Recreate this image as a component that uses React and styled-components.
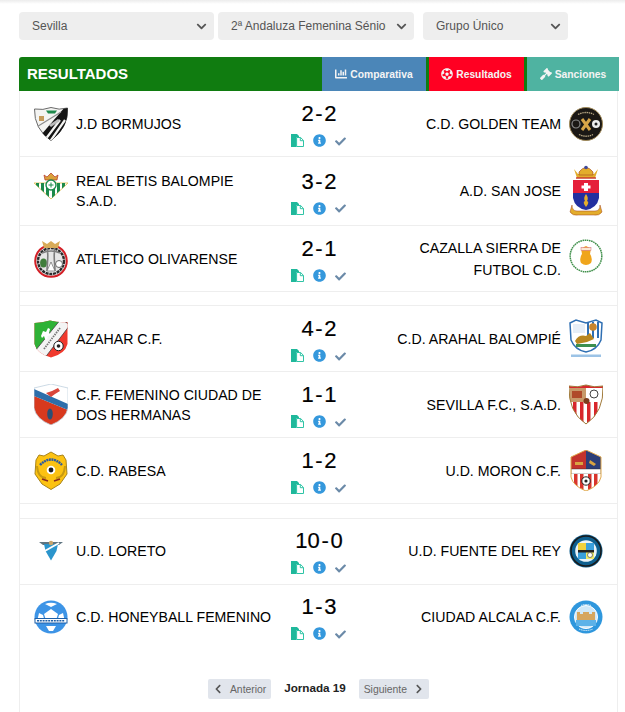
import React from "react";
import styled, { createGlobalStyle } from "styled-components";
import { FaChartBar, FaFutbol, FaGavel, FaInfoCircle, FaCheck, FaChevronLeft, FaChevronRight, FaChevronDown } from "react-icons/fa";

const Global = createGlobalStyle`
  html, body { margin: 0; padding: 0; background: #fff; }
  body { font-family: "Liberation Sans", Arial, sans-serif; color: #000; }
`;

const Page = styled.div`
  width: 625px; height: 712px; overflow: hidden; display: flex; flex-direction: column;
`;
const TopShade = styled.div`
  height: 4px; flex: none; background: linear-gradient(#ececec, #fff);
`;
const Filters = styled.div`
  display: flex; margin: 8px 0 17px 19px; height: 28px;
`;
const SelectWrap = styled.div`
  position: relative; width: ${p => p.$w}px; margin-right: ${p => p.$mr}px; flex: none;
`;
const Select = styled.select`
  appearance: none; border: 0; outline: 0; width: 100%; height: 28px; border-radius: 4px;
  background: #eeeeee; color: #555; font: 12px "Liberation Sans", Arial, sans-serif;
  padding: 0 28px 0 13px;
`;
const Arrow = styled.span`
  position: absolute; right: 7px; top: 9px; color: #555; font-size: 11px; line-height: 0; pointer-events: none;
`;
const Panel = styled.div`
  margin: 0 6px 0 19px; flex: 1; display: flex; flex-direction: column;
`;
const Head = styled.div`
  height: 34px; background: #107c10; display: flex; align-items: stretch; border-radius: 3px 3px 0 0; flex: none;
`;
const Title = styled.div`
  flex: 1; color: #fff; font-weight: bold; font-size: 15px; line-height: 34px; padding-left: 8px;
`;
const Tab = styled.div`
  background: ${p => p.$bg}; width: ${p => p.$w}px; margin-left: ${p => p.$ml || 0}px; color: #f4f4f4;
  font-weight: bold; font-size: 10.3px; display: flex; align-items: center; justify-content: center; gap: 3px;
  svg { font-size: 12px; }
`;
const Body = styled.div`
  flex: 1; border-left: 1px solid #eee; border-right: 1px solid #eee; margin-right: 1px; display: flex; flex-direction: column;
`;
const Row = styled.div`
  display: grid; grid-template-columns: 255px 88px 255px; align-items: center;
  border-bottom: ${p => (p.$last ? "1px solid transparent" : "1px solid #eee")};
  padding: ${p => (p.$tight ? "7px 0 9px" : "8px 0")}; box-sizing: border-box;
  min-height: 66px; flex: none;
`;
const Spacer = styled.div`
  height: ${p => p.$h}px; border-bottom: 1px solid #eee; box-sizing: border-box; flex: none;
`;
const Team = styled.div`
  display: flex; align-items: center; gap: 8px; font-size: 14.15px; line-height: ${p => (p.$away ? 22 : 20)}px;
  padding: ${p => (p.$away ? "0 15px 0 0" : "0 0 0 14px")};
  justify-content: ${p => (p.$away ? "flex-end" : "flex-start")};
  text-align: ${p => (p.$away ? "right" : "left")};
`;
const TeamName = styled.span`
  flex: ${p => (p.$away ? "0 1 auto" : "1")}; min-width: 0;
`;
const Crest = styled.svg`
  width: 34px; height: ${p => p.$h}px; flex: none; display: block;
`;
const Middle = styled.div`
  display: flex; flex-direction: column; align-items: center;
`;
const Score = styled.div`
  font-size: 22px; line-height: 27px; height: 27px; word-spacing: -4.5px; -webkit-text-stroke: 0.2px #000; white-space: nowrap;
`;
const Actions = styled.div`
  display: flex; align-items: center; gap: 9px; height: 13px; margin: 7px 2px 0 0;
`;
const Info = styled(FaInfoCircle)`
  color: #3598dc; font-size: 13px; display: block;
`;
const Check = styled(FaCheck)`
  color: #6b8aa8; font-size: 11px; display: block; margin-top: 1px;
`;
const Pager = styled.div`
  display: flex; align-items: center; justify-content: center; margin-top: 28px; gap: 13px;
`;
const PageBtn = styled.div`
  height: 20px; background: #e1e5ec; border-radius: 2px; color: #666; font-size: 10.4px; display: flex;
  align-items: center; gap: 7px; box-sizing: border-box; width: ${p => p.$w}px; justify-content: center;
  svg { font-size: 10px; color: #555; }
`;
const PageLabel = styled.div`
  font-weight: bold; font-size: 11.7px; color: #222; margin-top: -3px;
`;

const CopyIcon = () => (
  <svg width="13" height="13" viewBox="0 0 13 13">
    <path d="M0 0h6l2 2v1H5.500v10H0z" fill="#1fb89b" />
    <path d="M5.600 3.500h4l2.900 2.900v6.100H5.600z" fill="#fff" stroke="#2fc4a6" />
    <path d="M9.300 3.500v3.200h3" fill="none" stroke="#2fc4a6" />
  </svg>
);

const shield1 = "M0.5 2 Q9 3.5 17 0.5 Q25 3.5 33.5 1 Q35 20 17 33.5 Q0 22 0.5 2Z";

const Bormujos = () => (
  <Crest $h={34} viewBox="0 0 34 34">
    <defs><clipPath id="b1"><path d={shield1} /></clipPath></defs>
    <path d={shield1} fill="#f4f4f2" stroke="#6a6a6a" />
    <g clipPath="url(#b1)">
      <path d="M7 28 L31 0 H36 V36 H12Z" fill="#141414" />
      <path d="M11 33L26 13M16.500 34L31 13M22.500 34L34 17" stroke="#f4f4f2" strokeWidth="2.200" />
      <path d="M1 21L27 5" stroke="#8c8c8c" strokeWidth="1.200" />
      <path d="M15 18L24 12L26 14L17 20Z" fill="#bbb" />
      <rect x="5" y="9" width="5" height="5" fill="#c59a5a" />
      <path d="M12 3.500h11l-2 3h-7z" fill="#1f8a4c" />
    </g>
  </Crest>
);
const Betis = () => (
  <Crest $h={38} viewBox="0 0 34 38">
    <defs><clipPath id="b2"><path d="M0 11H34L17 27Z" /></clipPath></defs>
    <path d="M11 8 L10 3 L13 5 L17 1 L21 5 L24 3 L23 8Z" fill="#d9a13a" stroke="#b5322a" strokeWidth=".7" />
    <path d="M0 11H34L17 27Z" fill="#fff" stroke="#e3c76c" />
    <g clipPath="url(#b2)">
      {[2, 7, 12, 18, 23, 28].map(x => <rect key={x} x={x} y="10" width="3" height="18" fill="#1c8a4a" />)}
    </g>
    <circle cx="17" cy="13" r="5" fill="#fff" stroke="#1c8a4a" strokeWidth="1.400" />
    <path d="M14.500 13h5M17 10.500v5" stroke="#1c8a4a" />
  </Crest>
);
const Olivarense = () => (
  <Crest $h={38} viewBox="0 0 34 38">
    <circle cx="17" cy="21" r="15.800" fill="#e6e6e6" stroke="#d31f26" strokeWidth="2" />
    <circle cx="17" cy="21" r="13" fill="none" stroke="#2a2a2a" strokeWidth="2.400" strokeDasharray="3 .8" />
    <path d="M10 8L8 1L13 4L17 1L21 4L26 1L24 8Z" fill="#d8ab58" />
    <ellipse cx="9.500" cy="23" rx="3.400" ry="4.500" fill="#3f7d3a" />
    <path d="M13 8C15 14 13 24 13 31M21 8C19 14 21 24 21 31M8 13Q17 9 26 13" stroke="#7d7d7d" strokeWidth="1.600" fill="none" />
    <path d="M17 22L21 31H13Z" fill="#fff" stroke="#555" strokeWidth=".6" />
    <circle cx="25" cy="24" r="3.500" fill="#fff" stroke="#666" />
  </Crest>
);
const Azahar = () => (
  <Crest $h={38} viewBox="0 0 34 38">
    <defs><clipPath id="b4"><path d="M0.500 3Q8 2.500 16 0.500Q25 3 33.500 2V24Q31 34 17 37.500Q3 34 0.500 24Z" /></clipPath></defs>
    <g clipPath="url(#b4)">
      <rect width="34" height="38" fill="#f0392d" />
      <path d="M0 0H27L1 32H0Z" fill="#2fb236" />
      <path d="M27 -1L36 5L10 39L1 31Z" fill="#f4f4f4" stroke="#444" strokeWidth=".8" />
      <path d="M7 16l2-5 3 1 2-4 2 1-1 4 2 2-3 1-1 4-2-1-1-3-2 2z" fill="#fff" />
      <circle cx="24.500" cy="26" r="4.700" fill="#fff" stroke="#222" />
      <circle cx="24.500" cy="26" r="1.800" fill="#222" />
      <path d="M10 29L26 8" stroke="#777" strokeWidth="1.800" strokeDasharray="1.500 1" />
    </g>
  </Crest>
);
const Hermanas = () => (
  <Crest $h={41} viewBox="0 0 34 41">
    <defs><clipPath id="b5"><path d="M0 4L17 0L34 4V24Q32 35 17 41Q2 35 0 24Z" /></clipPath></defs>
    <path d="M0 4L17 0L34 4V24Q32 35 17 41Q2 35 0 24Z" fill="#fff" />
    <g clipPath="url(#b5)">
      <path d="M0 12L34 26V41H0Z" fill="#d8391e" />
      <path d="M0 5L34 20V26L0 12Z" fill="#2d6eaa" />
      <path d="M12 9l6-2 6-3 2 3-5 3-4 3z" fill="#d9453a" />
      <ellipse cx="16" cy="30" rx="2.800" ry="5.500" fill="#2c4f74" />
    </g>
    <path d="M0 4L17 0L34 4V24Q32 35 17 41Q2 35 0 24Z" fill="none" stroke="#bfd0de" strokeWidth=".8" />
  </Crest>
);
const Rabesa = () => (
  <Crest $h={39} viewBox="0 0 34 39">
    <path d="M5 4L10 5L17 1L24 5L29 4L32 9L33 23L26 33L17 38.500L8 33L1 23L2 9Z" fill="#fcc212" stroke="#a8841c" />
    <path d="M6 14Q17 3 28 14" fill="none" stroke="#2c5aa0" strokeWidth="2.400" strokeDasharray="2 .6" />
    <path d="M3 15Q4 27 12 27M31 15Q30 27 22 27" fill="none" stroke="#c79a12" strokeWidth="2" />
    <circle cx="17" cy="19" r="4.300" fill="#fff" />
    <circle cx="17" cy="19" r="2.400" fill="#1c1c1c" />
    <path d="M8 28L14 30M20 30L26 28" stroke="#8a2a1e" strokeWidth="1.800" />
  </Crest>
);
const Loreto = () => (
  <Crest $h={34} viewBox="0 0 34 34">
    <path d="M5 8H29L25 11H9Z" fill="#5e7480" />
    <path d="M10 10H24L22.500 17L17 26.500L11.500 17Z" fill="#2b95cc" />
    <path d="M9 18L25 9" stroke="#fff" strokeWidth="2" />
    <circle cx="17" cy="9" r="2.200" fill="#c9a46c" />
  </Crest>
);
const Honeyball = () => (
  <Crest $h={34} viewBox="0 0 34 34">
    <circle cx="17" cy="17" r="16.500" fill="#3d94e6" />
    <path d="M17 9L24 14L21.500 22H12.500L10 14Z" fill="#fff" />
    <path d="M5 13L9 15L11 22H3ZM29 13L25 15L23 22H31Z" fill="#fff" />
    <path d="M11 4Q17 1.500 23 4L17 7Z" fill="#fff" />
    <path d="M12 26H22L19 31H15Z" fill="#fff" />
    <rect x="0.500" y="18" width="33" height="5.500" fill="#1c5fa8" />
    <rect x="1.500" y="19" width="31" height="3.500" fill="#fff" />
    <path d="M3 20.700H31" stroke="#1c5fa8" strokeWidth="1.600" strokeDasharray="2 .8" />
  </Crest>
);
const Golden = () => (
  <Crest $h={34} viewBox="0 0 34 34">
    <circle cx="17" cy="17" r="16.500" fill="#1b1815" stroke="#a08a5b" />
    <path d="M13 12L21 23M21 12L13 23" stroke="#d7a548" strokeWidth="3" />
    <circle cx="7" cy="17" r="4" fill="none" stroke="#888" strokeWidth="1.200" />
    <circle cx="27" cy="17" r="4" fill="#eee" />
    <circle cx="27" cy="17" r="1.500" fill="#222" />
    <path d="M9 7.500Q17 3.500 25 7.500M10 27.500Q17 31 24 27.500" fill="none" stroke="#b9a884" strokeWidth="1.300" strokeDasharray="1.500 .7" />
  </Crest>
);
const SanJose = () => (
  <Crest $h={52} viewBox="0 0 34 52">
    <path d="M5 4L9 9H25L29 4L26 13H8Z" fill="#e3ad2c" />
    <path d="M10 7Q17 -2 24 7V10H10Z" fill="#e3ad2c" stroke="#a1431e" strokeWidth=".6" />
    <circle cx="17" cy="2.500" r="1.800" fill="#3f4a9c" />
    <path d="M7 13H27" stroke="#c8362a" strokeWidth="1.400" />
    <path d="M4 15H30V28H4Z" fill="#e51f3a" />
    <path d="M4 28H30V33Q28 43 17 45Q6 43 4 33Z" fill="#2330a0" />
    <path d="M15 18h4v2.500h2.500v3H19v2.500h-4v-2.500h-2.500v-3H15z" fill="#fff" />
    <path d="M17 29Q20 33 18 36Q21 37 17 42Q13 37 16 36Q14 33 17 29Z" fill="#e3ad2c" />
    <path d="M3 40Q3 46 8 46H26Q31 46 31 40L33 47Q30 51 25 50H9Q4 51 1 47Z" fill="#e3ad2c" stroke="#a1431e" strokeWidth=".5" />
  </Crest>
);
const Cazalla = () => (
  <Crest $h={40} viewBox="0 0 34 40">
    <circle cx="17" cy="17" r="15.800" fill="#fff" stroke="#3f8f4a" strokeWidth="1.500" strokeDasharray="1.600 .6" />
    <path d="M17 7L22 9.500L21 15Q24 19 22 24Q17 28 12 24Q10 19 13 15L12 9.500Z" fill="#f0a51c" />
    <rect x="12" y="8.500" width="10" height="3" fill="#fbe6cf" stroke="#c9455a" strokeWidth=".4" />
  </Crest>
);
const Arahal = () => (
  <Crest $h={41} viewBox="0 0 34 41">
    <path d="M1 5L7 2L17 5L27 2L33 5L32 22Q28 32 17 34Q6 32 2 22Z" fill="#fff" stroke="#2f6fb3" strokeWidth="1.500" />
    <path d="M4 6H16V15H4Z" fill="#e6eef7" />
    <path d="M19 5V20M24 4V20M29 4V20" stroke="#2f6fb3" strokeWidth="2" />
    <circle cx="24" cy="9" r="3.800" fill="#c9852c" />
    <path d="M6 23Q10 16 17 18L21 15L25 21L18 24L8 26Z" fill="#b8861f" />
    <rect x="7" y="26" width="20" height="3" fill="#3d8f4f" />
    <rect x="2" y="36.500" width="30" height="2.500" fill="#9cc3e6" />
  </Crest>
);
const Sevilla = () => (
  <Crest $h={41} viewBox="0 0 34 41">
    <defs><clipPath id="b6"><path d="M0 2Q9 4 17 1Q25 4 34 2Q35 28 17 40Q-1 28 0 2Z" /></clipPath></defs>
    <g clipPath="url(#b6)">
      <rect width="34" height="41" fill="#fff" />
      {[4, 11, 18, 25].map(x => <rect key={x} x={x} y="18" width="3.500" height="24" fill="#d8262c" />)}
      <rect width="34" height="4" fill="#d8262c" />
      <rect x="1" y="4" width="16" height="14" fill="#c89a6a" />
      <rect x="3" y="7" width="10" height="7" fill="#b04a2a" />
      <circle cx="17.500" cy="17" r="3" fill="#7c3d1e" />
      <circle cx="25" cy="10" r="4" fill="#fff" stroke="#444" />
    </g>
    <path d="M0 2Q9 4 17 1Q25 4 34 2Q35 28 17 40Q-1 28 0 2Z" fill="none" stroke="#a07a3a" strokeWidth="1" />
  </Crest>
);
const Moron = () => (
  <Crest $h={41} viewBox="0 0 34 41">
    <defs><clipPath id="b7"><path d="M2 7L17 0L32 7V27Q30 36 17 41Q4 36 2 27Z" /></clipPath></defs>
    <g clipPath="url(#b7)">
      <rect x="2" width="15" height="20" fill="#c3332c" />
      <rect x="17" width="15" height="20" fill="#2c3e78" />
      <path d="M6 15h8v-3h-8z" fill="#d9a441" />
      <path d="M21 10l6 4-2 2-5-3z" fill="#d9a441" />
      <rect x="2" y="19" width="30" height="5" fill="#fff" stroke="#222" strokeWidth=".4" />
      <rect x="2" y="24" width="30" height="17" fill="#fff" />
      {[5, 11, 19, 25].map(x => <rect key={x} x={x} y="24" width="3.500" height="17" fill="#d8342c" />)}
      <circle cx="17" cy="31" r="4.200" fill="#fff" stroke="#222" />
      <circle cx="17" cy="31" r="1.600" fill="#222" />
    </g>
    <path d="M2 7L17 0L32 7V27Q30 36 17 41Q4 36 2 27Z" fill="none" stroke="#e0a84c" />
  </Crest>
);
const Fuente = () => (
  <Crest $h={34} viewBox="0 0 34 34">
    <circle cx="17" cy="17" r="16.500" fill="#0e5f8e" />
    <circle cx="17" cy="17" r="15" fill="none" stroke="#1a1a1a" strokeWidth="1.500" />
    <circle cx="17" cy="17" r="10.800" fill="#e9f3f9" />
    <rect x="9" y="9" width="8" height="8" fill="#f1d23d" />
    <rect x="17" y="9" width="8" height="8" fill="#3aa0dc" />
    <rect x="9" y="17" width="8" height="8" fill="#3aa0dc" />
    <rect x="17" y="17" width="8" height="8" fill="#f1ea6a" />
    <rect x="9" y="16" width="16" height="2.500" fill="#222" />
    <circle cx="21" cy="21" r="2.500" fill="#fff" stroke="#333" strokeWidth=".6" />
  </Crest>
);
const Alcala = () => (
  <Crest $h={34} viewBox="0 0 34 34">
    <circle cx="17" cy="17" r="16.500" fill="#2f97dd" />
    <circle cx="17" cy="17" r="11.500" fill="#cfe8f8" stroke="#fff" />
    <path d="M8 12h3v2h3v-2h6v2h3v-2h3v8H8z" fill="#d6a65e" />
    <rect x="7" y="20" width="20" height="6" fill="#5db2e8" />
    <path d="M12 5.500Q17 3.500 22 5.500M10 29Q17 32 24 29" fill="none" stroke="#e3f1fb" strokeWidth="1" strokeDasharray="1.200 .6" />
  </Crest>
);

const days = [
  { gap: 0, matches: [
    ["J.D BORMUJOS", Bormujos, "2 - 2", "C.D. GOLDEN TEAM", Golden],
    ["REAL BETIS BALOMPIE S.A.D.", Betis, "3 - 2", "A.D. SAN JOSE", SanJose],
    ["ATLETICO OLIVARENSE", Olivarense, "2 - 1", "CAZALLA SIERRA DE FUTBOL C.D.", Cazalla],
  ] },
  { gap: 14, matches: [
    ["AZAHAR C.F.", Azahar, "4 - 2", "C.D. ARAHAL BALOMPIÉ", Arahal],
    ["C.F. FEMENINO CIUDAD DE DOS HERMANAS", Hermanas, "1 - 1", "SEVILLA F.C., S.A.D.", Sevilla],
    ["C.D. RABESA", Rabesa, "1 - 2", "U.D. MORON C.F.", Moron],
  ] },
  { gap: 15, tight: true, matches: [
    ["U.D. LORETO", Loreto, "10 - 0", "U.D. FUENTE DEL REY", Fuente],
    ["C.D. HONEYBALL FEMENINO", Honeyball, "1 - 3", "CIUDAD ALCALA C.F.", Alcala],
  ] },
];

const Match = ({ m, last, tight }) => {
  const [home, HomeLogo, score, away, AwayLogo] = m;
  return (
    <Row $last={last} $tight={tight}>
      <Team><HomeLogo /><TeamName>{home}</TeamName></Team>
      <Middle>
        <Score>{score}</Score>
        <Actions><CopyIcon /><Info /><Check /></Actions>
      </Middle>
      <Team $away><TeamName $away>{away}</TeamName><AwayLogo /></Team>
    </Row>
  );
};

export default function App() {
  return (
    <Page>
      <Global />
      <TopShade />
      <Filters>
        <SelectWrap $w={195} $mr={4}>
          <Select defaultValue="Sevilla"><option>Sevilla</option></Select>
          <Arrow><FaChevronDown /></Arrow>
        </SelectWrap>
        <SelectWrap $w={196} $mr={9}>
          <Select defaultValue="f"><option value="f">2ª Andaluza Femenina Sénior</option></Select>
          <Arrow><FaChevronDown /></Arrow>
        </SelectWrap>
        <SelectWrap $w={145} $mr={0}>
          <Select defaultValue="Grupo Único"><option>Grupo Único</option></Select>
          <Arrow><FaChevronDown /></Arrow>
        </SelectWrap>
      </Filters>
      <Panel>
        <Head>
          <Title>RESULTADOS</Title>
          <Tab $bg="#4b86b8" $w={104}><FaChartBar />Comparativa</Tab>
          <Tab $bg="#ff0022" $w={95} $ml={3}><FaFutbol />Resultados</Tab>
          <Tab $bg="#4fb3a1" $w={92} $ml={3}><FaGavel />Sanciones</Tab>
        </Head>
        <Body>
          {days.map((d, i) => (
            <React.Fragment key={i}>
              {d.gap > 0 && <Spacer $h={d.gap} />}
              {d.matches.map((m, j) => (
                <Match key={j} m={m} tight={d.tight} last={i === 2 && j === d.matches.length - 1} />
              ))}
            </React.Fragment>
          ))}
          <Pager>
            <PageBtn $w={63}><FaChevronLeft />Anterior</PageBtn>
            <PageLabel>Jornada 19</PageLabel>
            <PageBtn $w={70}>Siguiente<FaChevronRight /></PageBtn>
          </Pager>
        </Body>
      </Panel>
    </Page>
  );
}
